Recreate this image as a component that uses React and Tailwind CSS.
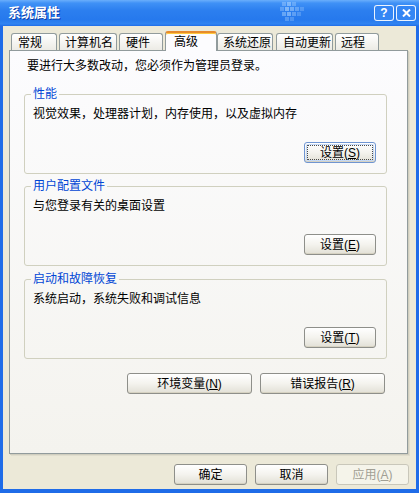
import clsx from "clsx";

const tabs = [
  { label: "常规", cls: "ml-[2px] w-[46px] pl-[6px]" },
  { label: "计算机名", cls: "ml-[2px] w-[58px] pl-[5px]" },
  { label: "硬件", cls: "ml-[2px] w-[44px] pl-[6px]" },
  { label: "高级", cls: "ml-[2px] w-[52px] pl-[8px]", active: true },
  { label: "系统还原", cls: "w-[56px] pl-[5px]" },
  { label: "自动更新", cls: "ml-[3px] w-[57px] pl-[6px]" },
  { label: "远程", cls: "ml-[2px] w-[44px] pl-[5px]" },
];

const groups = [
  { title: "性能", desc: "视觉效果，处理器计划，内存使用，以及虚拟内存", key: "S", focused: true, mt: "mt-[14px]" },
  { title: "用户配置文件", desc: "与您登录有关的桌面设置", key: "E", mt: "mt-[5px]" },
  { title: "启动和故障恢复", desc: "系统启动，系统失败和调试信息", key: "T", mt: "mt-[6px]" },
];

// watermark squares in the caption
const dots = [
  [2, 0, 0.35], [7, 0, 0.5], [12, 0, 0.3],
  [0, 5, 0.3], [5, 5, 0.55], [10, 5, 0.45], [15, 5, 0.35], [20, 5, 0.25],
  [2, 10, 0.4], [7, 10, 0.5], [12, 10, 0.35], [17, 10, 0.25],
  [5, 15, 0.3], [10, 15, 0.25],
];

function Key({ k }) {
  return (
    <span>
      (<span className="underline underline-offset-[1px]">{k}</span>)
    </span>
  );
}

function Btn({ children, className, focused, disabled }) {
  return (
    <div
      className={clsx(
        "relative flex h-[21px] items-center justify-center rounded-[3px] border text-[12px] leading-[14px]",
        disabled
          ? "border-[#c9c7ba] bg-[#f5f4ea] text-[#a19f94]"
          : "bg-linear-to-b from-white via-[#f4f3ee] to-[#e2e0d6] text-black shadow-[inset_0_-1px_0_#d6d2c2]",
        !disabled && (focused ? "border-[#6f95d2]" : "border-[#8e8f8a]"),
        className
      )}
    >
      {focused && (
        <span className="absolute inset-[2px] rounded-[1px] border border-dotted border-[#4a4a4a] shadow-[0_0_0_1px_#c4d8f5]" />
      )}
      <span className="relative">{children}</span>
    </div>
  );
}

function Group({ g }) {
  return (
    <fieldset
      className={clsx(
        "ml-[14px] w-[363px] rounded-[3px] border border-[#d0d0bf] px-0 pt-[6px] pb-[10px]",
        g.mt
      )}
    >
      <legend className="ml-[6px] px-[2px] leading-[14px] text-[#0046d5]">{g.title}</legend>
      <div className="pl-[8px] leading-[14px]">{g.desc}</div>
      <div className="mt-[21px] flex justify-end pr-[10px]">
        <Btn className="w-[72px]" focused={g.focused}>
          设置<Key k={g.key} />
        </Btn>
      </div>
    </fieldset>
  );
}

export default function App() {
  return (
    <div className="flex h-[493px] w-[419px] flex-col bg-[#1f6ce8] font-['Liberation_Sans','Noto_Sans_CJK_SC',sans-serif] text-[12px] text-black">
      {/* caption */}
      <div className="flex h-[26px] shrink-0 items-center bg-[linear-gradient(180deg,#6aaefb_0%,#3f91f6_12%,#2c7fef_40%,#2679ed_75%,#3184f1_92%,#1f6ce8_100%)] pr-[3px] pl-[8px]">
        <span className="text-[13px] font-bold leading-[16px] text-white [text-shadow:1px_1px_0_#0c3aa8]">
          系统属性
        </span>
        <svg className="ml-[220px] mb-[2px]" width="26" height="20" viewBox="0 0 26 20">
          {dots.map(([x, y, o], i) => (
            <rect key={i} x={x} y={y} width="4" height="4" fill="#bfe0ff" opacity={o} />
          ))}
        </svg>
        <div className="ml-auto flex gap-[2px]">
          <div className="flex h-[16px] w-[20px] items-center justify-center rounded-[3px] border border-white/90 bg-[#3486f4] text-[12px] font-bold leading-none text-white">
            ?
          </div>
          <div className="flex h-[16px] w-[20px] items-center justify-center rounded-[3px] border border-white/90 bg-[#3486f4]">
            <svg width="9" height="8" viewBox="0 0 9 8">
              <path d="M1 0.5 L8 7.5 M8 0.5 L1 7.5" stroke="white" strokeWidth="2" />
            </svg>
          </div>
        </div>
      </div>

      {/* client */}
      <div className="mx-[3px] mb-[4px] flex flex-1 flex-col bg-[#ece9d8] pt-[5px] pb-[4px] pl-[6px]">
        <div className="flex h-[20px] items-end">
          {tabs.map((t) =>
            t.active ? (
              <div
                key={t.label}
                className={clsx(
                  "relative z-10 h-[20px] rounded-t-[3px] border-x border-t-2 border-x-[#919b9c] border-t-[#e68b2c] bg-[#fcfcfe] pt-[2px] leading-[14px] shadow-[inset_0_1px_0_#ffc83c]",
                  t.cls
                )}
              >
                {t.label}
              </div>
            ) : (
              <div
                key={t.label}
                className={clsx(
                  "mb-[1px] h-[17px] rounded-t-[3px] border-x border-t border-[#919b9c] bg-linear-to-b from-white to-[#ecebe5] pt-[2px] leading-[14px]",
                  t.cls
                )}
              >
                {t.label}
              </div>
            )
          )}
        </div>

        <div className="-mt-[1px] h-[404px] w-[399px] border border-[#919b9c] bg-linear-to-b from-[#fcfcfe] to-[#f4f3ee] pt-[8px] shadow-[1px_1px_0_#d0cebf,2px_2px_0_#e0ddcd]">
          <div className="pl-[17px] leading-[14px]">要进行大多数改动，您必须作为管理员登录。</div>
          {groups.map((g) => (
            <Group key={g.title} g={g} />
          ))}
          <div className="mt-[14px] ml-[14px] flex w-[363px] justify-end gap-[8px] pr-[2px]">
            <Btn className="w-[125px]">
              环境变量<Key k="N" />
            </Btn>
            <Btn className="w-[125px]">
              错误报告<Key k="R" />
            </Btn>
          </div>
        </div>

        <div className="mt-[10px] flex justify-end gap-[8px] pr-[7px]">
          <Btn className="w-[73px]">确定</Btn>
          <Btn className="w-[73px]">取消</Btn>
          <Btn className="w-[73px]" disabled>
            应用<Key k="A" />
          </Btn>
        </div>
      </div>
    </div>
  );
}
